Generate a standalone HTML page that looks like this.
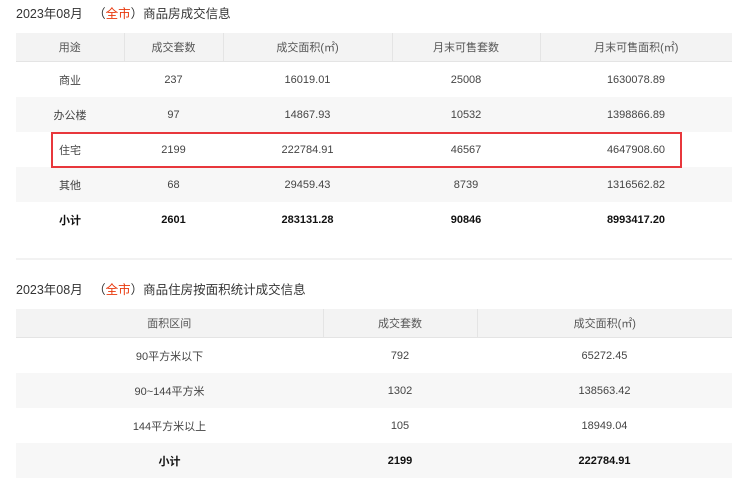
<!DOCTYPE html>
<html><head><meta charset="utf-8"><style>
body{margin:0;width:740px;height:489px;background:#fff;font-family:"Liberation Sans","Noto Sans CJK SC",sans-serif;color:#333;position:relative;overflow:hidden}
.t{position:absolute;left:16px;font-size:12.5px;color:#333}
.t .r{color:#e8380d}
table{position:absolute;left:16px;width:716px;border-collapse:collapse;font-size:11px;table-layout:fixed}
td,th{text-align:center;padding:0;font-weight:normal;color:#444}
th{background:#f3f3f3;border-left:1px solid #e4e4e4;border-bottom:1px solid #e4e4e4;height:28px;color:#555}
th:first-child{border-left:none}
tr.g td{background:#f7f7f7}
td{height:35px}
tr.b td{font-weight:bold;color:#111}
.box{position:absolute;left:51px;top:132px;width:627px;height:32px;border:2px solid #e8373c}
.sep{position:absolute;left:16px;top:258px;width:716px;height:2px;background:#f2f2f2}
</style></head><body>
<div class="t" style="top:3px">2023年08月 &nbsp;&nbsp;（<span class="r">全市</span>）商品房成交信息</div>
<table style="top:33px">
<colgroup><col style="width:108px"><col style="width:99px"><col style="width:169px"><col style="width:148px"><col style="width:192px"></colgroup>
<tr><th>用途</th><th>成交套数</th><th>成交面积(㎡)</th><th>月末可售套数</th><th>月末可售面积(㎡)</th></tr>
<tr><td>商业</td><td>237</td><td>16019.01</td><td>25008</td><td>1630078.89</td></tr>
<tr class="g"><td>办公楼</td><td>97</td><td>14867.93</td><td>10532</td><td>1398866.89</td></tr>
<tr><td>住宅</td><td>2199</td><td>222784.91</td><td>46567</td><td>4647908.60</td></tr>
<tr class="g"><td>其他</td><td>68</td><td>29459.43</td><td>8739</td><td>1316562.82</td></tr>
<tr class="b"><td>小计</td><td>2601</td><td>283131.28</td><td>90846</td><td>8993417.20</td></tr>
</table>
<div class="box"></div>
<div class="sep"></div>
<div class="t" style="top:279px">2023年08月 &nbsp;&nbsp;（<span class="r">全市</span>）商品住房按面积统计成交信息</div>
<table style="top:309px">
<colgroup><col style="width:307px"><col style="width:154px"><col style="width:255px"></colgroup>
<tr><th>面积区间</th><th>成交套数</th><th>成交面积(㎡)</th></tr>
<tr><td>90平方米以下</td><td>792</td><td>65272.45</td></tr>
<tr class="g"><td>90~144平方米</td><td>1302</td><td>138563.42</td></tr>
<tr><td>144平方米以上</td><td>105</td><td>18949.04</td></tr>
<tr class="g b"><td>小计</td><td>2199</td><td>222784.91</td></tr>
</table>
</body></html>
